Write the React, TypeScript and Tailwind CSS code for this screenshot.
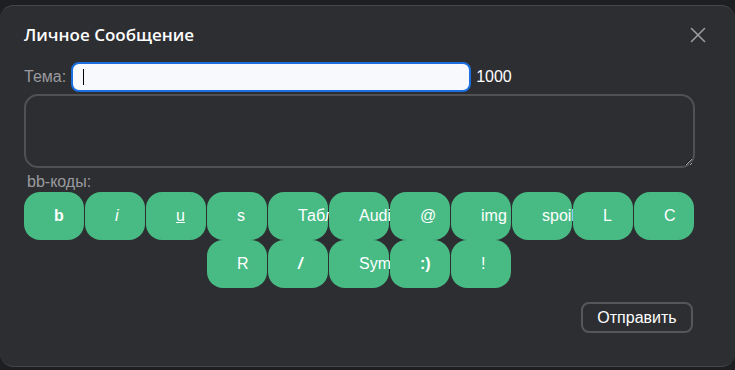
import { X } from "lucide-react";

// bb-code buttons, in the order they appear
const codes: { label: string; cls?: string }[] = [
  { label: "b", cls: "font-bold" },
  { label: "i", cls: "italic" },
  { label: "u", cls: "underline" },
  { label: "s" },
  { label: "Таблица" },
  { label: "Audio" },
  { label: "@" },
  { label: "img" },
  { label: "spoiler" },
  { label: "L" },
  { label: "C" },
  { label: "R" },
  { label: "/", cls: "italic font-bold" },
  { label: "Symbol" },
  { label: ":)", cls: "font-bold" },
  { label: "!" },
];

function CodeButton({ label, cls }: { label: string; cls?: string }) {
  return (
    <div
      className={`mr-px flex h-[48px] w-[60px] shrink-0 items-center rounded-[16px] bg-[#48bb85] pl-[30px] text-[16px] whitespace-nowrap text-white ${cls ?? ""}`}
    >
      {label}
    </div>
  );
}

export default function App() {
  return (
    <div
      className="h-[370px] w-[735px] overflow-hidden bg-[#1e1f22] pt-[5px]"
      style={{ fontFamily: '"Liberation Sans", Arial, sans-serif' }}
    >
      <div className="h-[362px] rounded-[14px] border-t border-b border-[#45464a] bg-[#2d2e32] px-6">
        {/* header */}
        <div className="flex h-[56px] items-center justify-between pt-[1px]">
          <h2
            className="text-[17px] font-semibold text-white"
            style={{ fontFamily: '"Open Sans", "Noto Sans", sans-serif' }}
          >
            Личное Сообщение
          </h2>
          <X className="h-[26px] w-[26px] text-[#9b9ca0]" strokeWidth={1.5} />
        </div>

        {/* subject */}
        <div className="flex h-[30px] items-center text-[16px]">
          <span className="text-[#9a9b9f]">Тема:</span>
          <div className="ml-[5px] flex h-[30px] w-[400px] items-center rounded-[8px] border-2 border-[#1b6fe0] bg-[#f8f9fd] px-[10px]">
            <span className="h-[16px] w-px bg-black" />
          </div>
          <span className="ml-[5px] text-white">1000</span>
        </div>

        <textarea className="mt-[2px] block h-[74px] w-[671px] resize-y rounded-[14px] border-2 border-[#505155] bg-transparent text-white outline-none" />

        <div className="pl-[3px] pt-[4px] text-[16px] leading-[20px] text-[#9a9b9f]">bb-коды:</div>

        <div className="flex w-[671px] flex-wrap justify-center">
          {codes.map((c) => (
            <CodeButton key={c.label} label={c.label} cls={c.cls} />
          ))}
        </div>

        <div className="mt-[14px] flex w-[671px] justify-end pr-[2px]">
          <button className="h-[31px] w-[112px] rounded-[8px] border-2 border-[#56575b] text-[16px] text-white">
            Отправить
          </button>
        </div>
      </div>
    </div>
  );
}
